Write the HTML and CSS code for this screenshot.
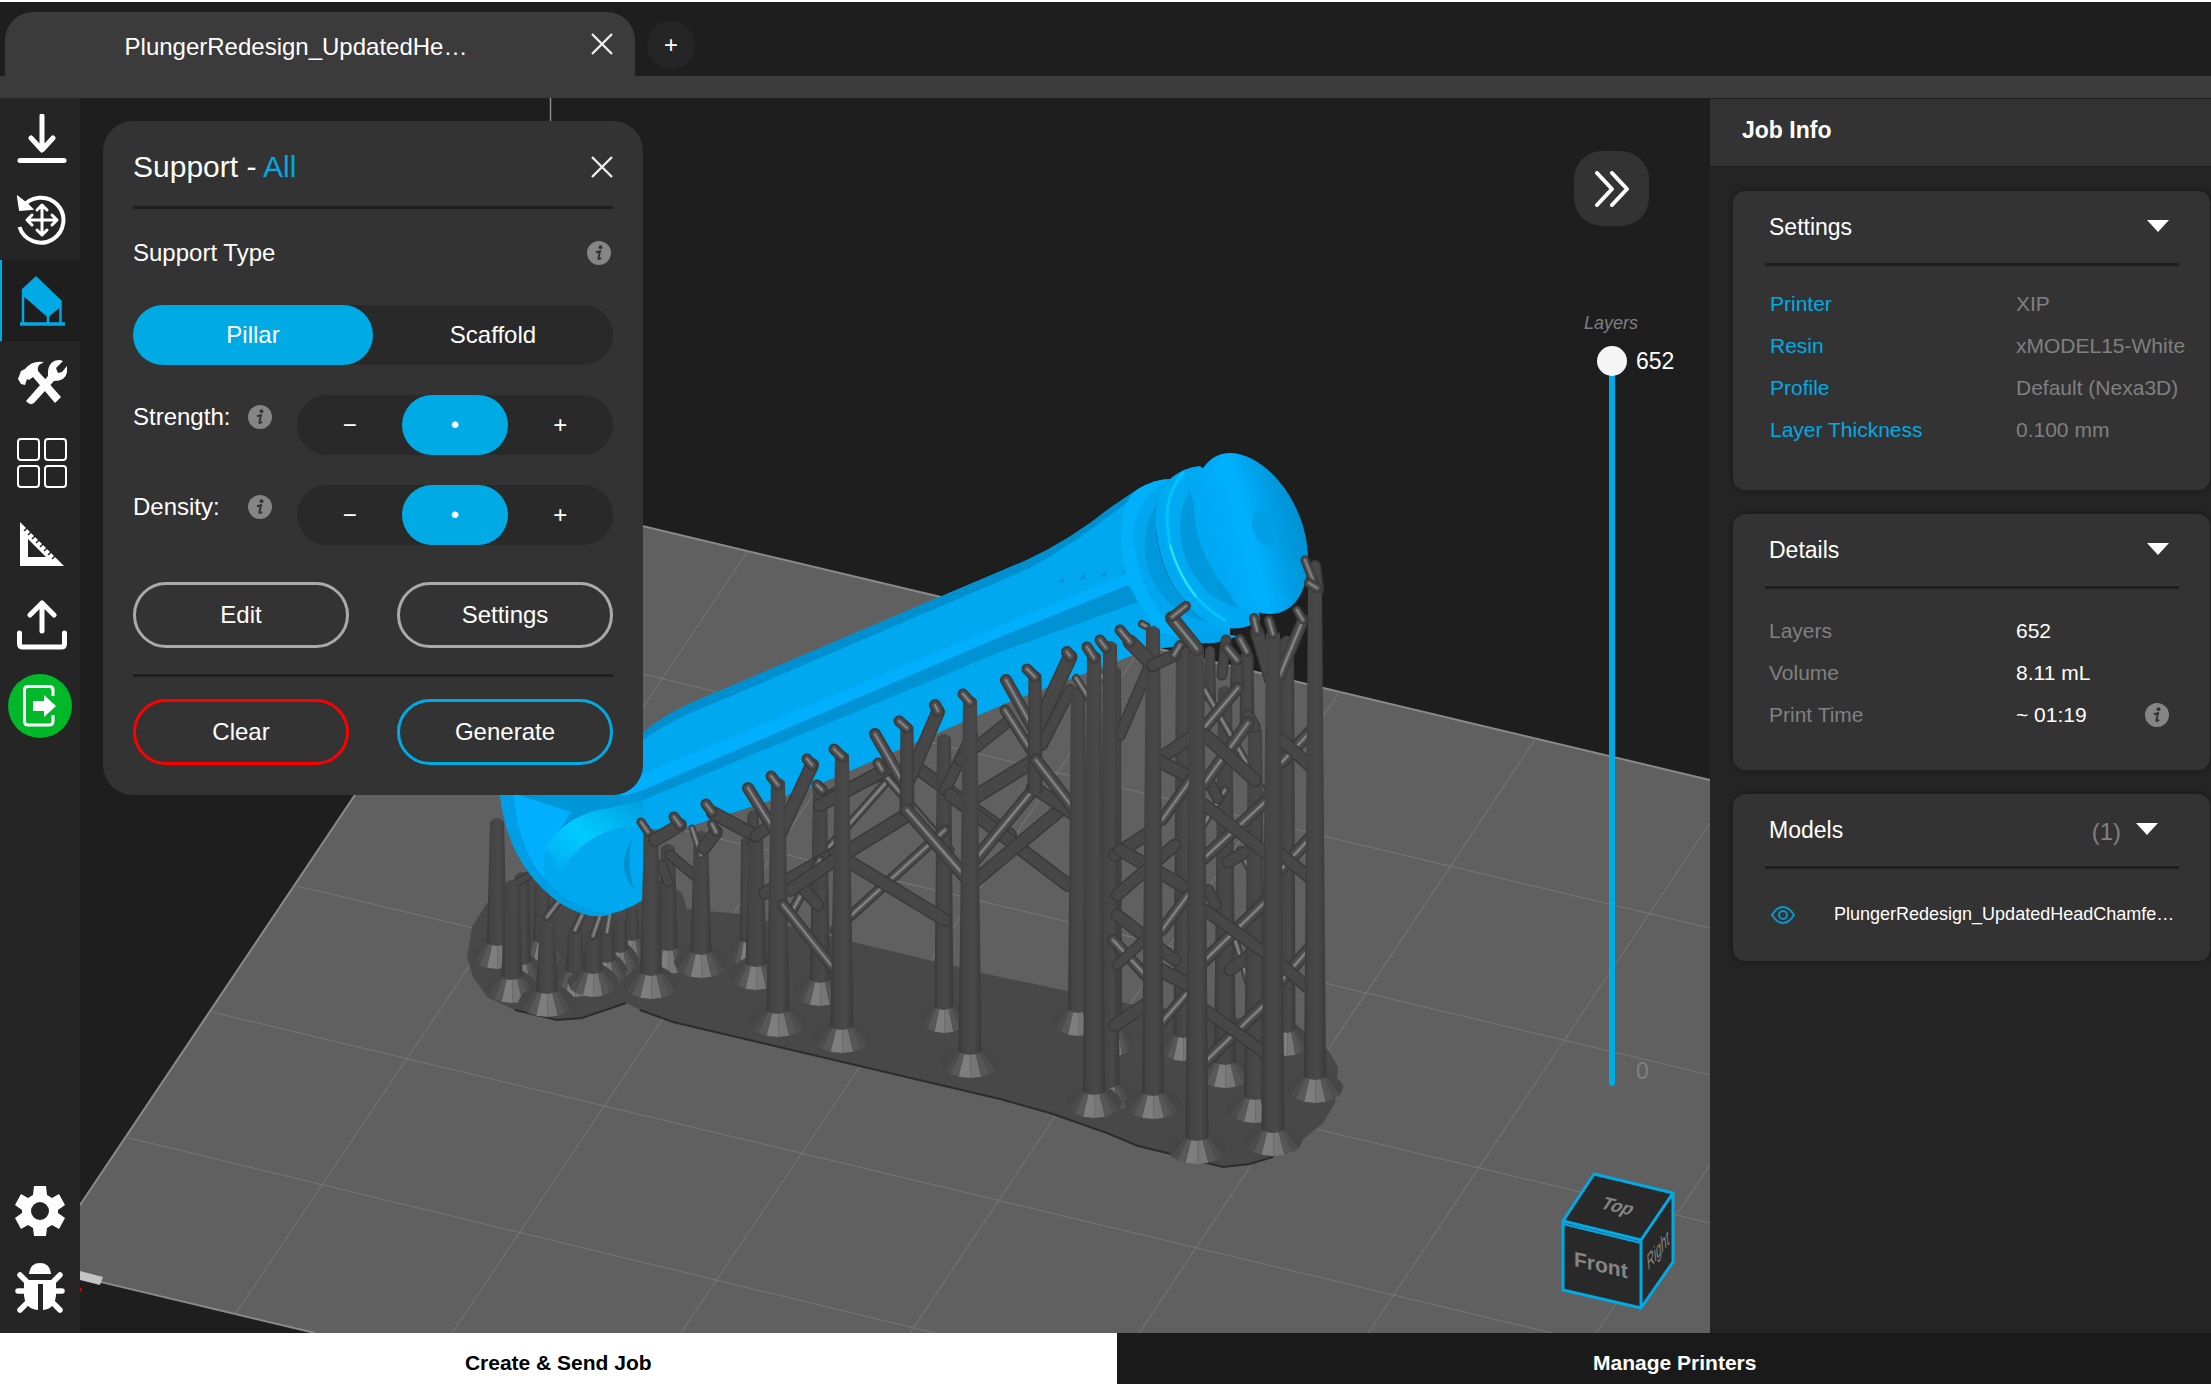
FILE: index.html
```html
<!DOCTYPE html>
<html lang="en">
<head>
    <meta charset="UTF-8">
    <meta name="viewport" content="width=device-width, initial-scale=1.0">
    <title>PlungerRedesign - Supports</title>
    <link rel="stylesheet" href="styles.css">
</head>
<body>
    <svg class="defs" aria-hidden="true">
        <symbol id="icon-close" viewBox="0 0 22 22">
            <path d="M1 1L21 21M21 1L1 21" fill="none" stroke="#eee" stroke-width="2.4"/>
        </symbol>
        <symbol id="icon-info" viewBox="0 0 24 24">
            <circle cx="12" cy="12" r="12" fill="#858585"/>
            <circle cx="13.500" cy="6.200" r="1.900" fill="#333"/>
            <path d="M9 11.200L13 10.200L11.400 17.200Q11.200 18.800 14.200 17" fill="none" stroke="#333" stroke-width="2"/>
        </symbol>
    </svg>

    <header class="topbar">
        <div class="tab">
            <span class="tab-name">PlungerRedesign_UpdatedHe…</span>
            <button class="icon-button tab-close" aria-label="Close tab"><svg><use href="#icon-close"/></svg></button>
        </div>
        <button class="add-tab" aria-label="New tab">+</button>
    </header>

    <main class="workspace">
        <nav class="sidebar">
            <button class="tool" aria-label="Import">
                <svg viewBox="0 0 50 50"><path d="M25 2V34M14 24L25 36L36 24" fill="none" stroke="#fff" stroke-width="5" stroke-linecap="round" stroke-linejoin="round"/><path d="M3 46.500H47" stroke="#fff" stroke-width="5" stroke-linecap="round"/></svg>
            </button>
            <button class="tool" aria-label="Transform">
                <svg viewBox="0 0 50 50"><path d="M5 13A22.500 22.500 0 1 1 2.500 32" fill="none" stroke="#fff" stroke-width="4"/><path d="M1 2L3 15L15 14L10 9Z" fill="#fff" stroke="#fff" stroke-width="2"/><path d="M25 11V39M11 25H39M20 15L25 10L30 15M20 35L25 40L30 35M15 20L10 25L15 30M35 20L40 25L35 30" fill="none" stroke="#fff" stroke-width="3" stroke-linecap="round" stroke-linejoin="round"/></svg>
            </button>
            <button class="tool active" aria-label="Support">
                <svg viewBox="0 0 50 50"><path d="M19 0L45 25L44 31L31 40L5 17V13Z" fill="#00aae4"/><path d="M6 14V47M43.500 28V47M31 38V47M6 18L31 40M43 29L31 40" fill="none" stroke="#00aae4" stroke-width="2.400"/><path d="M3 48H48" stroke="#00aae4" stroke-width="3.600"/></svg>
            </button>
            <button class="tool" aria-label="Repair">
                <svg viewBox="0 0 50 50"><path d="M1 22L4 14L8 12Q15 3 27 5L22 8Q20 11 21 14L44 40L38 46L16 20L12 23L10 22L8 28L4 27Z" fill="#fff"/><path d="M46 4L39 11L41 16L45 15L50 9Q52 24 37 24L17 46Q13 49 9 44L31 19Q30 3 43 3Z" fill="#fff"/></svg>
            </button>
            <button class="tool" aria-label="Arrange">
                <svg viewBox="0 0 50 50" fill="none" stroke="#fff" stroke-width="2"><rect x="1" y="1" width="21" height="21" rx="3"/><rect x="28" y="1" width="21" height="21" rx="3"/><rect x="1" y="28" width="21" height="21" rx="3"/><rect x="28" y="28" width="21" height="21" rx="3"/></svg>
            </button>
            <button class="tool" aria-label="Measure">
                <svg viewBox="0 0 50 50"><path fill-rule="evenodd" d="M3 3L47 47H3ZM11 20V38H29Z" fill="#fff"/><path d="M7 12L10 9M11 16L14 13M15 20L18 17M19 24L22 21M23 28L26 25M27 32L30 29M31 36L34 33M35 40L38 37" stroke="#252525" stroke-width="1.500"/></svg>
            </button>
            <button class="tool" aria-label="Export">
                <svg viewBox="0 0 50 50" fill="none" stroke="#fff" stroke-width="5" stroke-linecap="round" stroke-linejoin="round"><path d="M25 31V3M13 15L25 3L37 15M2.500 33V44Q2.500 47 6 47H44Q47.500 47 47.500 44V33"/></svg>
            </button>
            <button class="tool" aria-label="Send job">
                <svg class="send" viewBox="0 0 64 64"><circle cx="32" cy="32" r="32" fill="#00b828"/><path d="M45 22V16Q45 12.500 41 12.500H20Q16.500 12.500 16.500 16V47Q16.500 51 20 51H41Q45 51 45 47V41" fill="none" stroke="#fff" stroke-width="3"/><path d="M25 27H36V21L48 32L36 43V37H25Z" fill="#fff"/></svg>
            </button>
            <div class="sidebar-bottom">
                <button class="tool-small" aria-label="Preferences">
                    <svg viewBox="0 0 50 50"><path fill-rule="evenodd" fill="#fff" d="M19 0H31L32 9L37 12L44 8L50 19L43 24V27L50 32L44 43L37 39L32 42L31 50H19L18 42L13 39L6 43L0 32L7 27V24L0 19L6 8L13 12L18 9ZM25 16A9 9 0 1 0 25 34A9 9 0 1 0 25 16Z"/></svg>
                </button>
                <button class="tool-small" aria-label="Report a bug">
                    <svg viewBox="0 0 50 50"><path d="M14 11Q15 0 25 0Q35 0 36 11Z" fill="#fff"/><path d="M9 17H41V32Q40 46 28 47V21H23V47Q10 46 9 32Z" fill="#fff"/><path d="M5 12L12 19M45 12L38 19M3 28H10M47 28H40M5 47L12 40M45 47L38 40" stroke="#fff" stroke-width="5.500" stroke-linecap="round"/></svg>
                </button>
            </div>
        </nav>

        <section class="viewport">
            <svg class="scene" viewBox="80 98 1630 1235" preserveAspectRatio="xMinYMin slice">
                <defs>
                    <linearGradient id="pillar">
                        <stop offset="0" stop-color="#383838"/>
                        <stop offset=".2" stop-color="#444"/>
                        <stop offset=".65" stop-color="#494949"/>
                        <stop offset="1" stop-color="#3a3a3a"/>
                    </linearGradient>
                    <linearGradient id="disc" x1=".2" y1=".6" x2=".9" y2=".35">
                        <stop offset="0" stop-color="#00a9f4"/>
                        <stop offset=".4" stop-color="#00b0ff"/>
                        <stop offset=".75" stop-color="#009ce2"/>
                        <stop offset="1" stop-color="#0093d4"/>
                    </linearGradient>
                    <linearGradient id="chamfer" x1="0" y1="1" x2="1" y2="0">
                        <stop offset="0" stop-color="#00a8ef"/>
                        <stop offset=".45" stop-color="#0cf"/>
                        <stop offset="1" stop-color="#009ce0"/>
                    </linearGradient>
                </defs>

                <!-- build plate -->
                <path d="M550.500 98V504" stroke="#8a8a8a" stroke-width="1.500"/>
                <path d="M550 504L1710 780V1333H315L80 1276V1205Z" fill="#606060"/>
                <path class="plate-edge" d="M80 1205L550 504L1710 780M80 1277L315 1333"/>
                <path class="plate-grid" d="M125 1137L935 1333M212 1012L1552 1333M297 886L1710 1223M381 758L1710 1075M466 632L1710 928"/>
                <path class="plate-grid" d="M236 1313L748 551M452 1333L945 598M681 1333L1143 645M910 1333L1340 691M1139 1333L1536 738M1368 1333L1710 823M1596 1333L1710 1165"/>
                <path d="M80 1271L103 1277L100 1285L80 1280Z" fill="#c4c4c4"/>
                <path d="M80 1288h1v3h-1z" fill="#f00"/>

                <!-- raft -->
                <path d="M467 957L472 927L487 903L530 870L640 870L682 893L687 909L740 914L853 942L1000 977L1130 1004L1293 1025L1328 1050L1338 1067L1335 1103L1323 1123L1300 1142L1273 1157L1250 1164L1223 1167L1210 1163L1167 1153L1138 1146L1107 1133L1050 1113L1000 1099L673 1022L640 1010L626 1003L582 1018L557 1020L515 1010L487 997L473 977Z" fill="#484848"/>
                <path d="M1273 1157L1250 1164L1223 1167L1167 1153L1138 1146L1107 1133L1050 1113L1000 1099L673 1022L640 1010M626 1003L582 1018L557 1020L515 1010" fill="none" stroke="#2c2c2c" stroke-width="2"/>

                <g id="supportsBack"></g>

                <!-- plunger -->
                <g>
                    <path d="M500 795L470 700L560 740L643 733Q662 714 717 692L942 596L1027 560Q1070 540 1110 508L1138 489Q1155 479 1170 479L1230 560V640L1147 650L1007 703L813 787L688 827L643 830V900Q600 928 560 903Q508 866 500 795Z" fill="#00a8ef"/>
                    <path d="M643 733Q662 714 717 692L942 596L1027 560Q1070 540 1110 508L1138 489L1130 500Q1080 540 1030 568L717 702Q670 720 643 740Z" fill="#0090cf"/>
                    <path d="M560 812L643 774L1000 626L1127 574L1130 586L1000 637L640 792Z" fill="#00b0ff"/>
                    <path d="M570 814L643 790L1000 637L1128 585L1138 602L1000 652L643 800Q600 812 570 830L552 845Z" fill="#0092d2"/>
                    <path d="M500 795H516Q522 864 560 893Q584 912 612 914Q590 922 560 903Q508 866 500 795Z" fill="#009ee4"/>
                    <path d="M503 795H518L570 812L547 850Q540 860 546 880Q518 850 514 795Z" fill="#00b0ff"/>
                    <path d="M518 795H643V800L610 808Q580 812 552 842L572 812Z" fill="#0096d8"/>
                    <path d="M546 846Q570 812 610 808L643 800V826Q590 824 560 872Z" fill="url(#chamfer)"/>
                    <path d="M632 839Q615 866 634 890Q626 862 632 839Z" fill="#0090cf"/>
                    <path d="M1058 583L1064 577V582ZM1078 580L1085 573V579ZM1099 577L1106 571V576ZM1120 575L1126 569V573Z" fill="#0092d2"/>
                    <path d="M1138 489Q1155 479 1170 479L1220 480V640L1160 633Q1110 570 1124 510Q1128 496 1138 489Z" fill="#00b0fb"/>
                    <path d="M1170 479Q1130 500 1134 545Q1142 600 1180 636L1222 634L1190 500Z" fill="#00a6ee"/>
                    <path d="M1158 502Q1138 530 1148 570Q1164 612 1206 622L1215 600Z" fill="#0098dc"/>
                    <path d="M1170 479Q1184 467 1200 466L1240 500L1260 620Q1240 634 1215 625Q1180 610 1162 560Q1146 505 1170 479Z" fill="#00aaf2"/>
                    <path d="M1156 530Q1162 580 1188 604" fill="none" stroke="#007db8"/>
                    <path d="M1184 472Q1158 500 1172 552Q1188 600 1226 621" fill="none" stroke="#00c4ff" stroke-width="3"/>
                    <path d="M1170 545Q1178 574 1196 597" fill="none" stroke="#2ee4ff" stroke-width="2"/>
                    <path d="M1190 490Q1172 520 1186 560Q1204 600 1238 608L1210 560Z" fill="#0098dc"/>
                    <path d="M1230 453C1265 453 1308 503 1308 560C1308 594 1292 614 1270 614C1234 614 1194 558 1194 503C1194 474 1208 453 1230 453Z" fill="url(#disc)"/>
                    <ellipse cx="1264" cy="528" rx="11" ry="18" transform="rotate(-20 1264 528)" fill="#009fe6"/>
                    <path d="M1147 650L1195 630L1238 636Q1215 646 1200 642Z" fill="#00a4ea"/>
                </g>

                <g id="supportsFront"></g>
            </svg>

            <form class="panel">
                <div class="panel-title">
                    <h2>Support - <span>All</span></h2>
                    <button type="button" class="icon-button" aria-label="Close panel"><svg><use href="#icon-close"/></svg></button>
                </div>
                <hr>
                <div class="panel-label">
                    <span id="typeLabel">Support Type</span>
                    <svg class="info"><use href="#icon-info"/></svg>
                </div>
                <div class="segmented type" role="radiogroup" aria-labelledby="typeLabel">
                    <label><input type="radio" name="type" checked><span>Pillar</span></label>
                    <label><input type="radio" name="type"><span>Scaffold</span></label>
                </div>
                <div class="level">
                    <span class="level-label" id="strengthLabel">Strength:</span>
                    <svg class="info"><use href="#icon-info"/></svg>
                    <div class="segmented" role="radiogroup" aria-labelledby="strengthLabel">
                        <label><input type="radio" name="strength"><span>−</span></label>
                        <label><input type="radio" name="strength" checked><span>•</span></label>
                        <label><input type="radio" name="strength"><span>+</span></label>
                    </div>
                </div>
                <div class="level">
                    <span class="level-label" id="densityLabel">Density:</span>
                    <svg class="info"><use href="#icon-info"/></svg>
                    <div class="segmented" role="radiogroup" aria-labelledby="densityLabel">
                        <label><input type="radio" name="density"><span>−</span></label>
                        <label><input type="radio" name="density" checked><span>•</span></label>
                        <label><input type="radio" name="density"><span>+</span></label>
                    </div>
                </div>
                <div class="actions">
                    <button type="button" class="pill">Edit</button>
                    <button type="button" class="pill">Settings</button>
                </div>
                <hr>
                <div class="actions last">
                    <button type="button" class="pill danger">Clear</button>
                    <button type="button" class="pill primary">Generate</button>
                </div>
            </form>

            <div class="view-tools">
                <button class="collapse" aria-label="Collapse job info">
                    <svg viewBox="0 0 36 36" fill="none" stroke="#fff" stroke-width="4" stroke-linecap="round" stroke-linejoin="round"><path d="M3 2L18 18L3 34M18 2L33 18L18 34"/></svg>
                </button>
                <label class="layers-label" for="layer">Layers</label>
                <div class="layers">
                    <input type="range" id="layer" min="0" max="652" value="652">
                    <div class="layer-values">
                        <output for="layer">652</output>
                        <span>0</span>
                    </div>
                </div>
                <svg class="cube" viewBox="1560 1171 116 141">
                    <path d="M1594 1174L1673 1193L1673 1262L1641 1308L1563 1290V1221Z" fill="#292929"/>
                    <path d="M1594 1174L1673 1193L1641 1240L1563 1221ZM1563 1221V1290L1641 1308V1240M1673 1193V1262L1641 1308" fill="none" stroke="#00aae4" stroke-width="3" stroke-linejoin="round"/>
                    <path d="M1563 1224L1641 1243" stroke="#00aae4" stroke-width="2"/>
                    <text transform="translate(1599 1208) rotate(13) skewX(-21)" font-size="18">Top</text>
                    <text transform="translate(1574 1266) skewY(13)" font-size="21">Front</text>
                    <text class="side" transform="translate(1648 1271) rotate(-52) skewX(-46)" font-size="15">Right</text>
                </svg>
            </div>
        </section>

        <aside class="job">
            <h1>Job Info</h1>
            <div class="cards">
                <section class="card">
                    <header><h2>Settings</h2><button class="caret" aria-label="Toggle settings"></button></header>
                    <hr>
                    <table class="settings">
                        <tr><th>Printer</th><td>XIP</td></tr>
                        <tr><th>Resin</th><td>xMODEL15-White</td></tr>
                        <tr><th>Profile</th><td>Default (Nexa3D)</td></tr>
                        <tr><th>Layer Thickness</th><td>0.100 mm</td></tr>
                    </table>
                </section>
                <section class="card">
                    <header><h2>Details</h2><button class="caret" aria-label="Toggle details"></button></header>
                    <hr>
                    <table class="details">
                        <tr><th>Layers</th><td>652</td></tr>
                        <tr><th>Volume</th><td>8.11 mL</td></tr>
                        <tr><th>Print Time</th><td><div class="time">~ 01:19 <svg class="info"><use href="#icon-info"/></svg></div></td></tr>
                    </table>
                </section>
                <section class="card models">
                    <header><h2>Models</h2><span class="count">(1)</span><button class="caret" aria-label="Toggle models"></button></header>
                    <hr>
                    <div class="model">
                        <svg class="eye" viewBox="0 0 24 18" fill="none" stroke="#0a96cc" stroke-width="2"><path d="M1 9Q6 1 12 1Q18 1 23 9Q18 17 12 17Q6 17 1 9Z"/><circle cx="12" cy="9" r="4"/></svg>
                        <span>PlungerRedesign_UpdatedHeadChamfe…</span>
                    </div>
                </section>
            </div>
        </aside>
    </main>

    <footer class="modes">
        <button class="mode current">Create &amp; Send Job</button>
        <button class="mode">Manage Printers</button>
    </footer>

    <script>
        // p: pillar [x, top, bottom, width], c: same with a foot cone
        // s: strut [x1, y1, x2, y2, width], h: strut with a highlight
        const back = [
            ['c', 497, 822, 943, 20], ['c', 542, 880, 940, 18], ['c', 522, 876, 962, 18], ['s', 512, 886, 528, 876, 9],
            ['c', 632, 910, 938, 14], ['c', 620, 922, 950, 15], ['c', 607, 930, 960, 16],
            ['c', 575, 928, 971, 19], ['c', 593, 934, 971, 20],
            ['h', 575, 930, 582, 915, 8], ['h', 593, 936, 600, 916, 8], ['h', 607, 932, 610, 914, 7],
            ['c', 512, 884, 977, 21], ['c', 547, 918, 991, 22], ['h', 547, 917, 560, 900, 8],
            ['c', 747, 840, 940, 14],
            ['s', 880, 775, 820, 800, 13], ['h', 890, 778, 800, 880, 9], ['h', 885, 775, 950, 850, 9],
            ['s', 920, 770, 1010, 835, 14], ['h', 1110, 690, 1050, 590, 6],
            ['c', 820, 787, 980, 20], ['c', 944, 738, 1007, 19], ['s', 945, 790, 972, 735, 12],
            ['s', 960, 760, 1010, 720, 12],
            ['c', 1115, 670, 1030, 14], ['c', 1183, 650, 1035, 19], ['c', 1287, 640, 1030, 17],
            ['s', 1120, 735, 1150, 665, 12]
        ];

        const front = [
            ['s', 1315, 566, 1318, 590, 12], ['h', 1305, 560, 1315, 585, 9],
            ['c', 668, 848, 948, 19], ['s', 670, 855, 700, 880, 11], ['s', 662, 865, 668, 882, 11],
            ['c', 701, 835, 952, 21], ['h', 692, 828, 701, 855, 7], ['s', 704, 848, 716, 832, 14], ['h', 716, 832, 712, 824, 10],
            ['c', 651, 834, 973, 22], ['h', 648, 832, 641, 822, 9], ['s', 655, 840, 680, 825, 14], ['h', 680, 825, 674, 817, 11],
            ['p', 753, 814, 845, 13], ['c', 756, 836, 964, 21], ['s', 756, 836, 713, 813, 14], ['h', 712, 812, 706, 804, 11], ['s', 756, 836, 785, 815, 13],
            ['s', 765, 893, 835, 853, 14], ['h', 820, 860, 790, 915, 10], ['s', 800, 885, 818, 905, 13],
            ['s', 820, 805, 885, 770, 14], ['h', 822, 790, 817, 785, 11], ['h', 882, 770, 878, 763, 11],
            ['h', 835, 930, 945, 830, 11], ['s', 835, 853, 945, 920, 14], ['s', 790, 890, 842, 855, 14],
            ['s', 778, 838, 812, 765, 14], ['h', 812, 765, 807, 759, 11], ['h', 778, 836, 748, 788, 12],
            ['c', 778, 782, 1011, 23], ['h', 778, 785, 771, 776, 11], ['h', 783, 905, 835, 970, 12],
            ['s', 842, 855, 907, 815, 15], ['s', 907, 784, 938, 712, 14], ['h', 938, 711, 935, 705, 12], ['h', 905, 786, 875, 734, 12],
            ['p', 907, 727, 815, 15], ['h', 907, 728, 899, 721, 11], ['h', 907, 810, 968, 880, 14],
            ['c', 842, 755, 1027, 23], ['h', 842, 757, 834, 749, 11],
            ['s', 950, 795, 1068, 885, 14], ['s', 970, 885, 1060, 810, 14], ['h', 975, 860, 1033, 790, 13], ['s', 1033, 787, 1090, 825, 14],
            ['s', 970, 800, 1032, 762, 15], ['s', 1036, 730, 1070, 657, 15], ['h', 1070, 656, 1067, 652, 12],
            ['s', 1042, 745, 1070, 690, 12], ['h', 1034, 730, 1006, 680, 12], ['h', 1034, 755, 1005, 710, 11],
            ['p', 1035, 675, 792, 15], ['h', 1035, 677, 1027, 669, 11], ['h', 1036, 760, 1090, 830, 13],
            ['c', 970, 700, 1052, 23], ['h', 970, 702, 963, 694, 11],
            ['c', 1078, 690, 1010, 20], ['h', 1076, 678, 1090, 700, 8],
            ['c', 1110, 645, 1085, 19], ['h', 1106, 648, 1100, 640, 11],
            ['c', 1094, 655, 1092, 22], ['h', 1094, 658, 1087, 647, 11],
            ['p', 1210, 650, 700, 12], ['s', 1222, 675, 1226, 640, 11],
            ['c', 1225, 690, 1062, 22],
            ['h', 1225, 790, 1200, 830, 8], ['h', 1262, 790, 1205, 690, 8], ['h', 1240, 850, 1265, 900, 8], ['h', 1235, 940, 1262, 1025, 8],
            ['s', 1228, 862, 1250, 850, 13], ['s', 1230, 970, 1250, 955, 13], ['s', 1208, 780, 1218, 798, 12], ['s', 1208, 890, 1216, 905, 12],
            ['c', 1255, 730, 1097, 22], ['p', 1247, 655, 730, 15], ['s', 1248, 715, 1255, 727, 12],
            ['p', 1237, 660, 688, 14], ['h', 1237, 660, 1227, 648, 11], ['h', 1247, 652, 1240, 639, 10],
            // lattice between the tall pillars
            ['s', 1115, 855, 1150, 832, 14], ['s', 1120, 850, 1190, 890, 14], ['s', 1117, 895, 1175, 845, 13],
            ['s', 1117, 915, 1175, 960, 13], ['h', 1113, 940, 1148, 978, 12], ['s', 1117, 965, 1150, 935, 11],
            ['s', 1115, 1025, 1148, 1003, 14], ['s', 1157, 760, 1195, 735, 14], ['s', 1157, 760, 1195, 780, 14],
            ['h', 1162, 820, 1192, 778, 12], ['h', 1162, 930, 1188, 895, 12], ['h', 1162, 1022, 1188, 992, 11],
            ['s', 1160, 970, 1195, 988, 15],
            ['h', 1198, 735, 1238, 688, 12], ['h', 1203, 785, 1248, 723, 13], ['s', 1205, 735, 1255, 780, 14],
            ['h', 1200, 862, 1267, 800, 13], ['s', 1205, 805, 1268, 855, 13],
            ['h', 1200, 965, 1267, 900, 13], ['s', 1205, 910, 1268, 955, 13],
            ['h', 1205, 1062, 1267, 1002, 13], ['s', 1205, 1010, 1268, 1055, 13],
            ['h', 1282, 762, 1312, 730, 13], ['s', 1282, 740, 1312, 768, 13],
            ['h', 1282, 868, 1310, 838, 13], ['s', 1282, 855, 1310, 878, 13],
            ['h', 1282, 980, 1308, 950, 13], ['s', 1282, 965, 1308, 988, 13],
            ['c', 1153, 630, 1093, 22], ['s', 1153, 665, 1130, 642, 15], ['h', 1130, 642, 1120, 630, 11], ['s', 1153, 665, 1175, 655, 13], ['h', 1174, 655, 1180, 645, 10], ['h', 1146, 626, 1142, 624, 8],
            ['c', 1197, 650, 1138, 23], ['h', 1197, 649, 1172, 618, 14], ['h', 1172, 617, 1186, 606, 10],
            ['c', 1315, 588, 1077, 22], ['h', 1317, 588, 1309, 583, 10],
            ['h', 1280, 675, 1303, 620, 12], ['h', 1303, 620, 1297, 610, 9],
            ['s', 1271, 680, 1257, 632, 14], ['h', 1257, 631, 1254, 618, 10],
            ['c', 1273, 634, 1130, 23], ['h', 1273, 634, 1269, 620, 10]
        ];

        // facets of a foot cone, left to right: start and end (share of the width) and colour
        const facets = [
            [-1, -0.86, '#464646'], [-0.86, -0.66, '#4c4c4c'], [-0.66, -0.38, '#585858'],
            [-0.38, 0.02, '#7e7e7e'], [0.02, 0.38, '#767676'],
            [0.38, 0.66, '#565656'], [0.66, 0.86, '#4e4e4e'], [0.86, 1, '#464646']
        ];

        function strut(x1, y1, x2, y2, width, light) {
            const d = `M${x1} ${y1}L${x2} ${y2}`;
            return `<path class="strut edge" d="${d}" stroke-width="${width}"/>` +
                `<path class="strut" d="${d}" stroke-width="${width - 3}"/>` +
                (light ? `<path class="strut soft" d="${d}" stroke-width="5"/><path class="strut shine" d="${d}" stroke-width="2"/>` : '');
        }

        function foot(x, y, half) {
            const r = half * 2.6;
            const low = k => y + 10 + 16 * Math.sqrt(1 - k * k);
            let out = `<path d="M${x - half} ${y - 6}Q${x - r + 4} ${y} ${x - r} ${y + 10}H${x + r}Q${x + r - 4} ${y} ${x + half} ${y - 6}Z" fill="#464646"/>`;
            facets.forEach(([from, to, color]) => {
                out += `<path d="M${x + from * half} ${y - 3}H${x + to * half}L${x + to * r} ${low(to)}L${x + from * r} ${low(from)}Z" fill="${color}"/>`;
            });
            return out;
        }

        function pillar(x, top, bottom, width, cone) {
            const t = Math.min(7, width / 2 - 1);
            const b = width / 2;
            return (cone ? foot(x, bottom, b) : '') +
                `<path d="M${x - t} ${top}Q${x} ${top - 8} ${x + t} ${top}L${x + b} ${bottom}Q${x} ${bottom + 6} ${x - b} ${bottom}Z" fill="url(#pillar)"/>`;
        }

        function draw(id, parts) {
            document.getElementById(id).innerHTML = parts.map(([kind, a, b, c, d, e]) =>
                kind === 'c' || kind === 'p' ? pillar(a, b, c, d, kind === 'c') : strut(a, b, c, d, e, kind === 'h')
            ).join('');
        }

        draw('supportsBack', back);
        draw('supportsFront', front);
    </script>
</body>
</html>
```
FILE: styles.css
```css
:root {
    --accent: #00aae4;
    --bg: #1e1e1e;
    --side: #252525;
    --panel: #333333;
    --strip: #3b3b3b;
    --muted: #808080;
}

* {
    box-sizing: border-box;
}

body {
    margin: 0;
    height: 100vh;
    display: flex;
    flex-direction: column;
    overflow: hidden;
    background: var(--bg);
    color: #fff;
    font-family: "Liberation Sans", Arial, sans-serif;
    font-size: 24px;
}

button {
    font: inherit;
    color: inherit;
    background: none;
    border: 0;
    padding: 0;
    cursor: pointer;
}

h1, h2 {
    margin: 0;
    font-weight: normal;
}

hr {
    height: 3px;
    margin: 0;
    border: 0;
    background: var(--bg);
}

.defs {
    position: absolute;
    width: 0;
    height: 0;
}

.icon-button,
.icon-button svg {
    display: block;
    width: 22px;
    height: 22px;
}

.info {
    display: block;
    width: 24px;
    height: 24px;
    flex: none;
}

/* Top bar */
.topbar {
    flex: none;
    display: flex;
    height: 98px;
    padding: 10px 5px 0;
    border-top: 2px solid #fff;
    border-bottom: 22px solid var(--strip);
}

.tab {
    width: 630px;
    display: flex;
    align-items: center;
    padding-right: 22px;
    background: var(--strip);
    border-radius: 28px 28px 0 0;
}

.tab-name {
    flex: 1;
    padding-top: 6px;
    text-align: center;
}

.tab-close {
    margin-left: 4px;
}

.add-tab {
    width: 48px;
    height: 48px;
    margin: 9px 0 0 12px;
    border-radius: 50%;
    background: #252525;
}

/* Workspace */
.workspace {
    flex: 1;
    min-height: 0;
    display: grid;
    grid-template-columns: 80px 1fr 501px;
}

.sidebar {
    display: flex;
    flex-direction: column;
    background: var(--side);
}

.tool {
    height: 81px;
    display: flex;
    align-items: center;
    justify-content: center;
    padding-left: 4px;
}

.tool svg {
    width: 50px;
    height: 50px;
}

.tool .send {
    width: 64px;
    height: 64px;
    margin-right: 4px;
}

.tool.active {
    padding-left: 2px;
    border-left: 2px solid var(--accent);
    background: var(--bg);
}

.sidebar-bottom {
    margin: auto 0 20px 15px;
    display: grid;
    gap: 27px;
}

.tool-small,
.tool-small svg {
    display: block;
    width: 50px;
    height: 50px;
}

.viewport {
    position: relative;
    overflow: hidden;
}

.scene {
    display: block;
    width: 100%;
    height: 100%;
}

.plate-edge {
    fill: none;
    stroke: #8a8a8a;
    stroke-width: 2;
}

.plate-grid {
    fill: none;
    stroke: #787878;
    stroke-width: 1;
}

.strut {
    fill: none;
    stroke: #474747;
    stroke-linecap: round;
}

.strut.edge {
    stroke: #3a3a3a;
}

.strut.soft {
    stroke: #565656;
}

.strut.shine {
    stroke: #858585;
}

/* Support panel */
.panel {
    position: absolute;
    top: 23px;
    left: 23px;
    width: 540px;
    padding: 30px;
    border-radius: 30px;
    background: var(--panel);
}

.panel-title {
    display: flex;
    align-items: center;
    justify-content: space-between;
    height: 32px;
    margin-bottom: 23px;
}

.panel-title h2 {
    font-size: 30px;
    line-height: 32px;
}

.panel-title span {
    color: var(--accent);
}

.panel-label {
    display: flex;
    justify-content: space-between;
    align-items: center;
    height: 24px;
    margin: 32px 2px 40px 0;
}

.segmented {
    display: flex;
    height: 60px;
    flex: 1;
    border-radius: 30px;
    background: #292929;
}

.segmented label {
    position: relative;
    flex: 1;
    cursor: pointer;
}

.segmented input {
    position: absolute;
    opacity: 0;
}

.segmented span {
    display: block;
    line-height: 60px;
    text-align: center;
    border-radius: 30px;
}

.segmented input:checked + span {
    background: var(--accent);
}

.level {
    display: flex;
    align-items: flex-start;
    margin-top: 30px;
}

.level-label {
    width: 115px;
    line-height: 44px;
}

.level .info {
    margin: 10px 25px 0 0;
}

.actions {
    display: flex;
    justify-content: space-between;
    margin: 37px 0 26px;
}

.actions.last {
    margin: 22px 0 0;
}

.pill {
    width: 216px;
    height: 66px;
    border: 3px solid #aaa;
    border-radius: 33px;
}

.pill.danger {
    border-color: #f00;
}

.pill.primary {
    border-color: var(--accent);
}

/* Layer slider and view cube */
.view-tools {
    position: absolute;
    top: 53px;
    right: 34px;
    bottom: 21px;
    width: 126px;
    display: flex;
    flex-direction: column;
}

.collapse {
    width: 75px;
    height: 75px;
    margin-left: 24px;
    border-radius: 28px;
    background: var(--panel);
}

.collapse svg {
    display: block;
    width: 36px;
    height: 36px;
    margin: 0 auto;
}

.layers-label {
    margin: 87px 0 13px 34px;
    font-size: 18px;
    line-height: 20px;
    font-style: italic;
    color: var(--muted);
}

.layers {
    flex: 1;
    min-height: 0;
    display: flex;
    margin: 0 0 85px 47px;
}

.layers input {
    appearance: none;
    writing-mode: vertical-lr;
    direction: rtl;
    width: 30px;
    height: 100%;
    margin: 0;
    background: none;
}

.layers input::-webkit-slider-runnable-track {
    width: 6px;
    border-radius: 3px;
    background: var(--accent);
}

.layers input::-webkit-slider-thumb {
    appearance: none;
    width: 30px;
    height: 30px;
    margin-left: -12px;
    border-radius: 50%;
    background: #f5f5f5;
}

.layer-values {
    display: flex;
    flex-direction: column;
    justify-content: space-between;
    margin-left: 9px;
    font-size: 23px;
    line-height: 30px;
}

.layer-values span {
    color: var(--muted);
}

.cube {
    width: 116px;
    height: 141px;
    margin-left: 10px;
    flex: none;
}

.cube text {
    fill: #858585;
    font-weight: bold;
}

.cube .side {
    font-weight: normal;
}

/* Job info */
.job {
    border-top: 1px solid var(--bg);
    background: var(--side);
}

.job h1 {
    height: 68px;
    padding-left: 32px;
    border-bottom: 1px solid var(--bg);
    background: var(--panel);
    font-size: 23px;
    font-weight: bold;
    line-height: 62px;
}

.cards {
    display: grid;
    gap: 24px;
    padding: 24px 1px 0 23px;
}

.card {
    border-radius: 12px;
    background: var(--panel);
    box-shadow: 0 0 8px rgba(0, 0, 0, 0.4);
}

.card header {
    display: flex;
    align-items: center;
    height: 72px;
    padding: 0 41px 0 36px;
}

.card h2 {
    flex: 1;
    font-size: 23px;
}

.card hr {
    margin: 0 31px 0 32px;
}

.caret {
    margin-bottom: 2px;
    border-top: 12px solid #fff;
    border-left: 11px solid transparent;
    border-right: 11px solid transparent;
}

.card table {
    width: 100%;
    border-collapse: collapse;
    table-layout: fixed;
    font-size: 21px;
}

.card tr {
    height: 42px;
}

.card th,
.card td {
    padding: 0;
    font-weight: normal;
    text-align: left;
    white-space: nowrap;
}

.card th {
    width: 283px;
    padding-left: 36px;
}

.card .settings {
    margin-top: 17px;
    color: var(--muted);
}

.card .settings th {
    padding-left: 37px;
    color: var(--accent);
}

.card .details {
    margin-top: 21px;
}

.card .details th {
    color: var(--muted);
}

.settings::after,
.details::after {
    content: "";
    display: block;
    height: 39px;
}

.details::after {
    height: 34px;
}

.time {
    display: flex;
    align-items: center;
    justify-content: space-between;
    margin-right: 41px;
}

.models header {
    padding-right: 52px;
}

.count {
    margin-right: 15px;
    padding-top: 4px;
    color: var(--muted);
}

.model {
    display: flex;
    align-items: center;
    padding: 35px 0 36px 38px;
    font-size: 18px;
    line-height: 21px;
}

.eye {
    width: 24px;
    height: 18px;
    margin-right: 39px;
}

/* Bottom mode switch */
.modes {
    flex: none;
    display: flex;
    height: 51px;
}

.mode {
    flex: 1;
    padding: 8px 0 0 22px;
    background: #1a1a1a;
    font-size: 21px;
    font-weight: bold;
}

.mode.current {
    flex: none;
    width: 50.5%;
    padding-left: 0;
    background: #fff;
    color: #000;
}
```
